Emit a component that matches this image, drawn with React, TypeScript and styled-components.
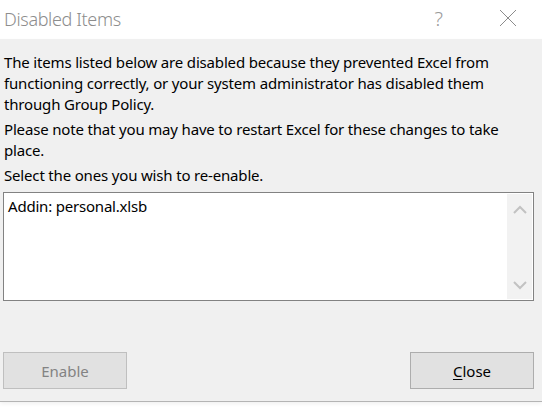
import React from 'react';
import styled, { createGlobalStyle } from 'styled-components';

const GlobalStyle = createGlobalStyle`
	html, body {
		margin: 0;
		padding: 0;
		background: #ffffff;
	}
	body {
		font-family: 'Noto Sans', 'Open Sans', sans-serif;
	}
`;

export default function App() {
	return (
		<>
			<GlobalStyle />
			<Dialog>
				<TitleBar>
					<Title>Disabled Items</Title>
					<TitleButtons>
						<HelpButton>?</HelpButton>
						<CloseIcon width="18" height="18" viewBox="0 0 18 18">
							<path d="M1 1 L17 17 M17 1 L1 17" stroke="#8c8c8c" strokeWidth="1" fill="none" />
						</CloseIcon>
					</TitleButtons>
				</TitleBar>
				<Body>
					<Paragraph>
						The items listed below are disabled because they prevented Excel from
						functioning correctly, or your system administrator has disabled them
						through Group Policy.
					</Paragraph>
					<Paragraph>
						Please note that you may have to restart Excel for these changes to take
						place.
					</Paragraph>
					<Paragraph>Select the ones you wish to re-enable.</Paragraph>
					<ListBox>
						<Items>
							<Item>Addin: personal.xlsb</Item>
						</Items>
						<ScrollTrack>
							<svg width="14" height="9" viewBox="0 0 14 9">
								<path d="M1 8 L7 2 L13 8" stroke="#c2c2c2" strokeWidth="2" fill="none" />
							</svg>
							<svg width="14" height="9" viewBox="0 0 14 9">
								<path d="M1 1 L7 7 L13 1" stroke="#c2c2c2" strokeWidth="2" fill="none" />
							</svg>
						</ScrollTrack>
					</ListBox>
					<Footer>
						<Button disabled>Enable</Button>
						<Button>
							<u>C</u>lose
						</Button>
					</Footer>
				</Body>
			</Dialog>
		</>
	);
}

const Dialog = styled.div`
	width: 542px;
	height: 418px;
	display: flex;
	flex-direction: column;
	background: #ffffff;
`;

const TitleBar = styled.div`
	height: 39px;
	display: flex;
	align-items: center;
	justify-content: space-between;
	padding-left: 4px;
	background: #ffffff;
`;

const Title = styled.span`
	font-size: 18px;
	font-weight: 300;
	letter-spacing: -0.35px;
	color: #8d8d8d;
	margin-top: -2px;
`;

const TitleButtons = styled.div`
	display: flex;
	align-items: center;
	padding-right: 25px;
`;

const HelpButton = styled.span`
	font-size: 20px;
	font-weight: 300;
	color: #9a9a9a;
	margin-right: 56px;
	margin-top: -3px;
`;

const CloseIcon = styled.svg`
	display: block;
	margin-top: -3px;
`;

const Body = styled.div`
	height: 363px;
	box-sizing: border-box;
	background: #f0f0f0;
	border-bottom: 1px solid #b4b4b4;
	box-shadow: 0 2px 4px rgba(0, 0, 0, 0.06);
	padding: 13px 8px 0 3px;
	display: flex;
	flex-direction: column;
`;

const Paragraph = styled.p`
	margin: 0 0 4px 1px;
	font-size: 15px;
	line-height: 21px;
	letter-spacing: -0.17px;
	color: #000000;
`;

const ListBox = styled.div`
	margin-top: 2px;
	width: 531px;
	height: 109px;
	box-sizing: border-box;
	border: 1px solid #828282;
	background: #ffffff;
	display: flex;
`;

const Items = styled.div`
	flex: 1;
	padding: 3px 4px;
`;

const Item = styled.div`
	font-size: 15px;
	line-height: 21px;
	letter-spacing: -0.2px;
	color: #000000;
`;

const ScrollTrack = styled.div`
	width: 25px;
	margin: 1px 1px 1px 0;
	background: #f2f2f2;
	display: flex;
	flex-direction: column;
	align-items: center;
	justify-content: space-between;
	padding: 11px 0 9px;
	box-sizing: border-box;
`;

const Footer = styled.div`
	margin-top: auto;
	margin-bottom: 12px;
	display: flex;
	justify-content: space-between;
	width: 531px;
`;

const Button = styled.button`
	width: 124px;
	height: 37px;
	box-sizing: border-box;
	border: 1px solid #adadad;
	background: #e1e1e1;
	font-family: 'Noto Sans', 'Open Sans', sans-serif;
	font-size: 15px;
	color: #000000;
	padding: 0;

	&:disabled {
		color: #838383;
		border-color: #bfbfbf;
	}

	u {
		text-underline-offset: 2px;
	}
`;
